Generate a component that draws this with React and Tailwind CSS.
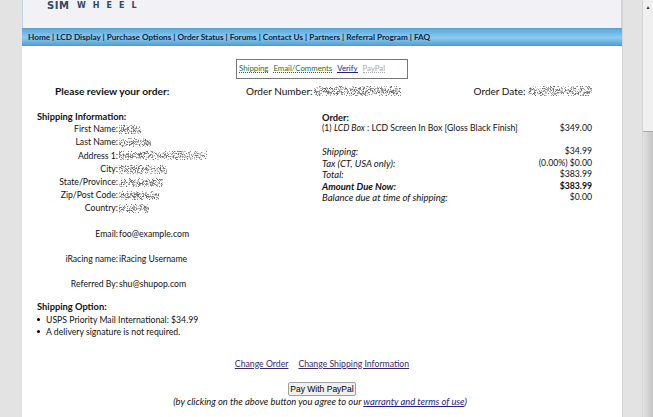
import React from "react";

function Noise({ w, h = 10, seed = 1 }) {
  let s = seed * 7919 + 13;
  const rnd = () => {
    s = (s * 16807) % 2147483647;
    return s / 2147483647;
  };
  const dots = [];
  for (let y = 0; y < h; y++) {
    for (let x = 0; x < w; x++) {
      const edge = Math.min(y, h - 1 - y) < 2 ? 0.3 : 0.6;
      if (rnd() < edge) {
        dots.push(<rect key={x + "-" + y} x={x} y={y} width="1" height="1" fill="#444" opacity={(0.15 + rnd() * 0.7).toFixed(2)} />);
      }
    }
  }
  return (
    <svg width={w} height={h} className="block shrink-0">
      {dots}
    </svg>
  );
}

const rows = [
  ["First Name:", 22, 1],
  ["Last Name:", 32, 2],
  ["Address 1:", 88, 3],
  ["City:", 48, 4],
  ["State/Province:", 44, 5],
  ["Zip/Post Code:", 40, 6],
  ["Country:", 30, 7],
];

function Row({ label, children, className = "" }) {
  return (
    <div className={"flex h-[13.2px] items-center " + className}>
      <div className="w-[81px] shrink-0 whitespace-nowrap text-right">{label}</div>
      <div className="ml-[1px] flex items-center">{children}</div>
    </div>
  );
}

function Line({ left, right, className = "" }) {
  return (
    <div className={"flex h-[11.5px] items-center justify-between " + className}>
      <span className="text-[9.5px] italic">{left}</span>
      <span>{right}</span>
    </div>
  );
}

export default function App() {
  return (
    <div className="flex h-[417px] w-[653px] overflow-hidden bg-[#e3e3e3] font-['Lato','Liberation_Sans',sans-serif] text-[8.7px] leading-none text-[#111]">
      <div className="ml-[22px] w-[600px] shrink-0 bg-white">
        <header className="h-[28px] border-x border-[#c3d5e6] bg-[#f1f1f6] pl-[24px] pt-[2px]">
          <div className="flex h-[8px] items-center font-['DejaVu_Sans',sans-serif] font-bold text-[#2e4a63]">
            <span className="w-[30px] text-[10px] tracking-[0.5px]">SIM</span>
            <span className="text-[8px] tracking-[7px]">WHEEL</span>
          </div>
        </header>
        <nav className="flex h-[18px] items-center border-t border-[#5a9fd0] bg-[linear-gradient(#5da8dc,#8ccbf0_50%,#4f9bd2)] pl-[6px] text-[8.2px] font-bold whitespace-nowrap text-[#10243c]">
          Home | LCD Display | Purchase Options | Order Status | Forums | Contact Us | Partners | Referral Program | FAQ
        </nav>
        <main className="pt-[13px]">
          <div className="ml-[214px] flex h-[20px] w-[172px] items-center gap-[5px] border border-[#777] pl-[2px] text-[7.8px]">
            <span className="border-b border-dotted border-[#1f7a1f] text-[#1f6f2a]">Shipping</span>
            <span className="border-b border-dotted border-[#1f7a1f] text-[#1f6f2a]">Email/Comments</span>
            <span className="border-b border-[#22228a] text-[#22228a]">Verify</span>
            <span className="border-b border-dotted border-[#aaa] text-[#aaa]">PayPal</span>
          </div>
          <div className="mt-[7px] flex h-[10px] items-center text-[10px]">
            <span className="ml-[33px] w-[191px] text-[10.2px] font-bold">Please review your order:</span>
            <span>Order Number:</span>
            <span className="ml-[1px]"><Noise w={87} seed={11} /></span>
            <span className="ml-[73px]">Order Date:</span>
            <span className="ml-[2px]"><Noise w={64} seed={12} /></span>
          </div>
          <div className="mt-[15px] flex">
            <div className="ml-[15px] w-[285px]">
              <div className="flex h-[12px] items-center text-[9.3px] font-bold">Shipping Information:</div>
              <div>
                {rows.map(([l, w, s]) => (
                  <Row key={l} label={l}>
                    <Noise w={w} h={9} seed={s} />
                  </Row>
                ))}
                <Row label="Email:" className="mt-[12px]">foo@example.com</Row>
                <Row label="iRacing name:" className="mt-[12px]">iRacing Username</Row>
                <Row label="Referred By:" className="mt-[12px]">shu@shupop.com</Row>
              </div>
              <div className="mt-[10px] flex h-[12px] items-center text-[9.3px] font-bold">Shipping Option:</div>
              <ul className="mt-[1px] list-none">
                <li className="flex h-[12px] items-center gap-[6px]"><span className="size-[3px] rounded-full bg-black" />USPS Priority Mail International: $34.99</li>
                <li className="flex h-[12px] items-center gap-[6px]"><span className="size-[3px] rounded-full bg-black" />A delivery signature is not required.</li>
              </ul>
            </div>
            <div className="mt-[1px] w-[270px]">
              <div className="flex h-[11px] items-center text-[9.3px] font-bold">Order:</div>
              <div className="flex h-[11px] items-center justify-between">
                <span>(1) <i>LCD Box</i> : LCD Screen In Box [Gloss Black Finish]</span>
                <span>$349.00</span>
              </div>
              <div className="mt-[12px]">
                <Line left="Shipping:" right="$34.99" />
                <Line left="Tax (CT, USA only):" right="(0.00%) $0.00" />
                <Line left="Total:" right="$383.99" />
                <Line left="Amount Due Now:" right="$383.99" className="font-bold" />
                <Line left="Balance due at time of shipping:" right="$0.00" />
              </div>
            </div>
          </div>
          <div className="mt-[20px] flex h-[12px] items-center justify-center gap-[10px] text-[#3b2a6a]">
            <a className="underline">Change Order</a>
            <a className="underline">Change Shipping Information</a>
          </div>
          <div className="mt-[12px] flex justify-center">
            <button className="h-[14px] w-[68px] rounded-[2px] border border-[#a0a0a0] bg-[#efefef] p-0 font-['Liberation_Sans',sans-serif] text-[8.5px] whitespace-nowrap text-black">Pay With PayPal</button>
          </div>
          <div className="flex h-[12px] items-center justify-center pr-[4px] text-[9.4px] italic">
            <span>(by clicking on the above button you agree to our <a className="text-[#22228a] underline">warranty and terms of use</a>)</span>
          </div>
        </main>
      </div>
      <div className="w-[21px] shrink-0 border-x border-[#d4d4d4]" />
      <aside className="flex w-[10px] shrink-0 flex-col bg-[#f0f0f0]">
        <div className="flex h-[10px] items-end justify-center text-[5px] text-[#333]">▲</div>
        <div className="mt-[121px] flex-1 border-t border-[#aaa] bg-[linear-gradient(90deg,#e2e2e2,#c4c4c4)]" />
      </aside>
    </div>
  );
}
